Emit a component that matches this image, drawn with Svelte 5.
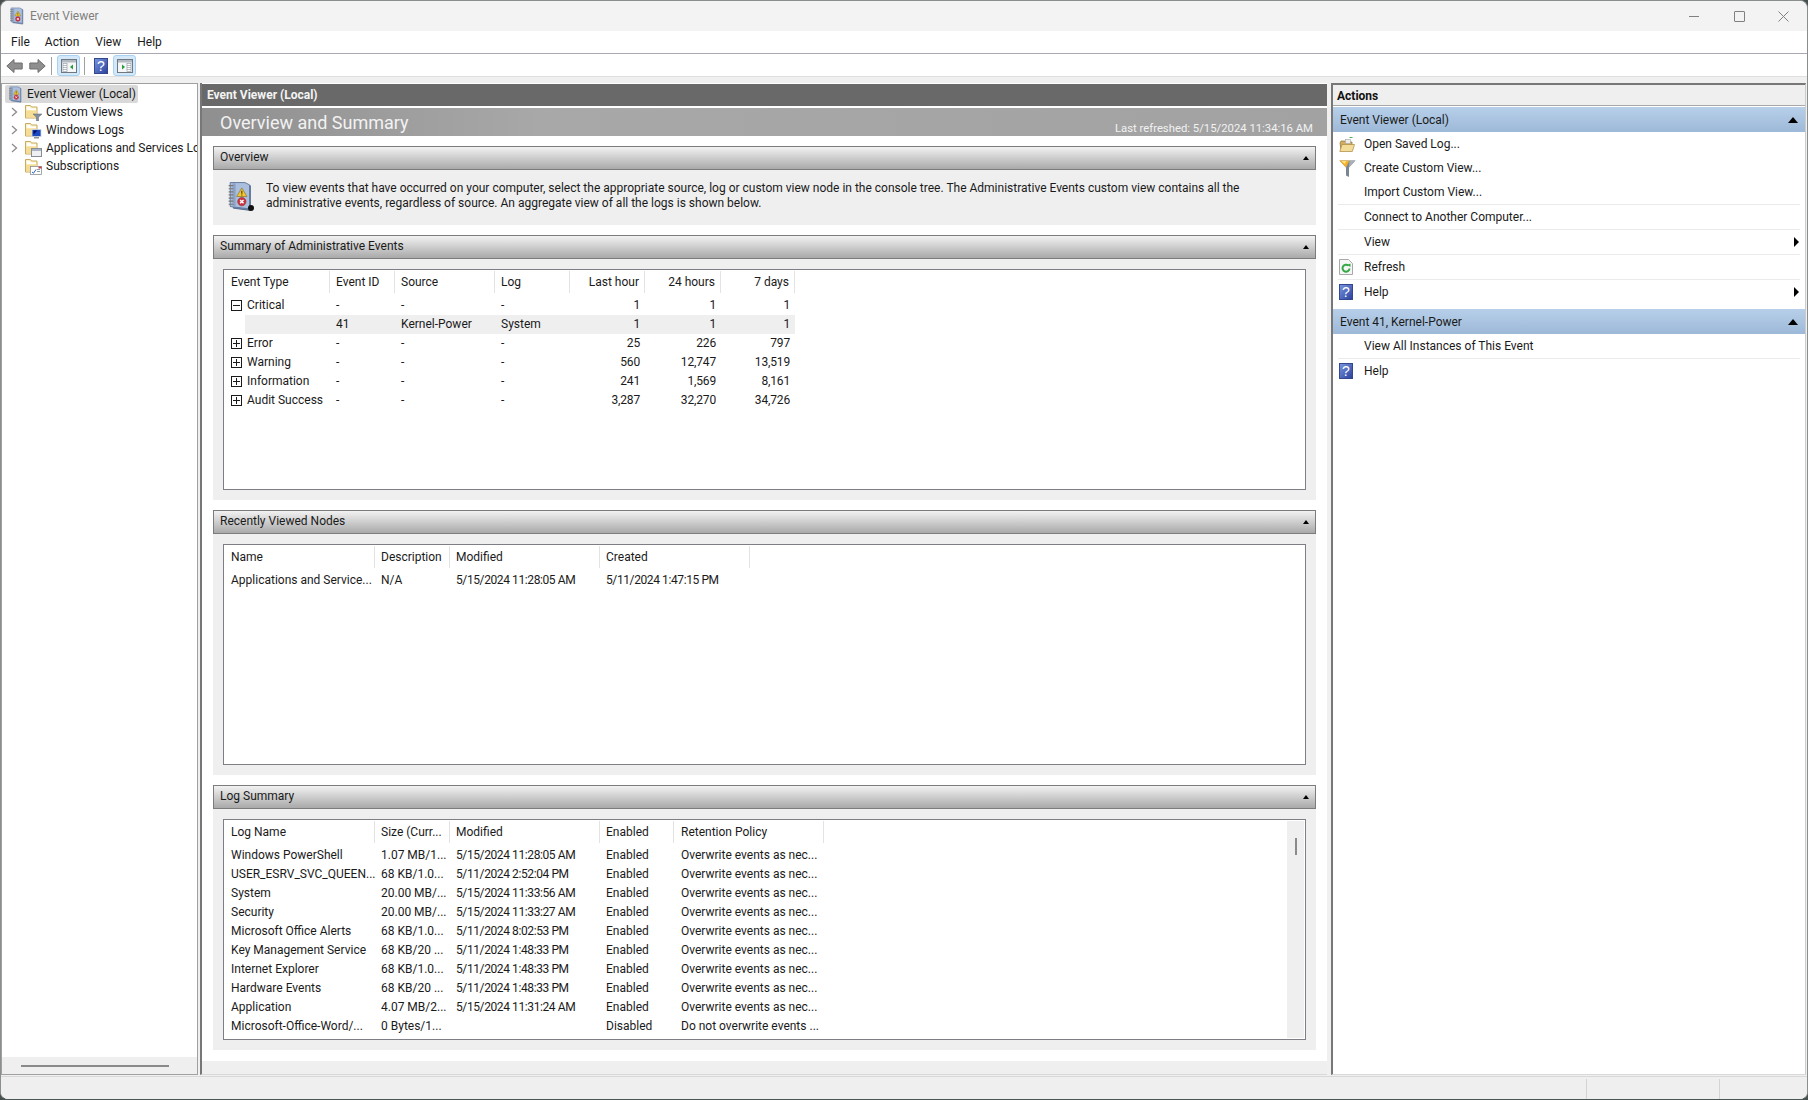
<script>
  const tree = [
    { label: 'Custom Views', kind: 'filter' },
    { label: 'Windows Logs', kind: 'logs' },
    { label: 'Applications and Services Logs', kind: 'apps' },
    { label: 'Subscriptions', kind: 'subs', leaf: true }
  ];
  const summaryRows = [
    { t: 'Critical', open: true, id: '-', src: '-', log: '-', a: '1', b: '1', c: '1' },
    { child: true, t: '', id: '41', src: 'Kernel-Power', log: 'System', a: '1', b: '1', c: '1' },
    { t: 'Error', id: '-', src: '-', log: '-', a: '25', b: '226', c: '797' },
    { t: 'Warning', id: '-', src: '-', log: '-', a: '560', b: '12,747', c: '13,519' },
    { t: 'Information', id: '-', src: '-', log: '-', a: '241', b: '1,569', c: '8,161' },
    { t: 'Audit Success', id: '-', src: '-', log: '-', a: '3,287', b: '32,270', c: '34,726' }
  ];
  const logs = [
    ['Windows PowerShell', '1.07 MB/1...', '5/15/2024 11:28:05 AM', 'Enabled', 'Overwrite events as nec...'],
    ['USER_ESRV_SVC_QUEEN...', '68 KB/1.0...', '5/11/2024 2:52:04 PM', 'Enabled', 'Overwrite events as nec...'],
    ['System', '20.00 MB/...', '5/15/2024 11:33:56 AM', 'Enabled', 'Overwrite events as nec...'],
    ['Security', '20.00 MB/...', '5/15/2024 11:33:27 AM', 'Enabled', 'Overwrite events as nec...'],
    ['Microsoft Office Alerts', '68 KB/1.0...', '5/11/2024 8:02:53 PM', 'Enabled', 'Overwrite events as nec...'],
    ['Key Management Service', '68 KB/20 ...', '5/11/2024 1:48:33 PM', 'Enabled', 'Overwrite events as nec...'],
    ['Internet Explorer', '68 KB/1.0...', '5/11/2024 1:48:33 PM', 'Enabled', 'Overwrite events as nec...'],
    ['Hardware Events', '68 KB/20 ...', '5/11/2024 1:48:33 PM', 'Enabled', 'Overwrite events as nec...'],
    ['Application', '4.07 MB/2...', '5/15/2024 11:31:24 AM', 'Enabled', 'Overwrite events as nec...'],
    ['Microsoft-Office-Word/...', '0 Bytes/1...', '', 'Disabled', 'Do not overwrite events ...']
  ];
  const actionsA = [
    { label: 'Open Saved Log...', icon: 'open' },
    { label: 'Create Custom View...', icon: 'funnel' },
    { label: 'Import Custom View...', sep: true },
    { label: 'Connect to Another Computer...', sep: true },
    { label: 'View', sep: true, more: true },
    { label: 'Refresh', sep: true, icon: 'refresh' },
    { label: 'Help', icon: 'help', more: true }
  ];
  const actionsB = [
    { label: 'View All Instances of This Event', sep: true },
    { label: 'Help', icon: 'help' }
  ];
</script>

{#snippet book(w, h)}
  <svg width={w} height={h} viewBox="0 0 16 20">
    <path d="M4 1.500 15 3v16L4 17.500z" fill="#6f8db8" stroke="#53688a" stroke-width=".6"/>
    <path d="M2 1h9.500l3 1.500v15.500L2 16.500z" fill="#a9bfdd" stroke="#60759a" stroke-width=".6"/>
    <path d="M3.500 1.500h2v15h-2z" fill="#8ea3c4"/>
    <path d="M1 3h3M1 5h3M1 7h3M1 9h3M1 11h3M1 13h3M1 15h3" stroke="#777" stroke-width=".8"/>
    <path d="M9.500 4.500 12.800 10H6.200z" fill="#f2c82e" stroke="#8a6a10" stroke-width=".4"/>
    <path d="M9.500 6.300v2M9.500 8.700v.6" stroke="#333" stroke-width=".7"/>
    <circle cx="9.500" cy="13.300" r="2.700" fill="#cc3340" stroke="#8a1c24" stroke-width=".3"/>
    <path d="M8.400 12.200l2.200 2.200M10.600 12.200l-2.200 2.200" stroke="#fff" stroke-width=".9"/>
  </svg>
{/snippet}

{#snippet folder(kind)}
  <svg width="17" height="17" viewBox="0 0 17 17">
    <path d="M.5 1.500h5l1 1.500h5.500v11H.5z" fill="#fdf0c4" stroke="#c8aa62"/>
    <path d="M2 3h3l1 1.500h5V6H2z" fill="#fff" />
    <path d="M1 6.500h10.500V13.500H1z" fill="#f6dd95"/>
    {#if kind === 'filter'}
      <path d="M8 10h9l-3.500 3.200V17h-2v-3.800z" fill="#87919c" stroke="#5d6670" stroke-width=".5"/>
    {:else if kind === 'logs'}
      <rect x="7" y="7.500" width="9" height="7" fill="#1c49bd" stroke="#d2d9e6" stroke-width=".8"/>
      <path d="M8.500 8.500l4 0-4 4z" fill="#000d60"/>
      <path d="M9 15h5v1.500H9z" fill="#8a8f98"/>
    {:else if kind === 'apps'}
      <rect x="6.500" y="8.500" width="10" height="8" fill="#eef0f4" stroke="#878c95"/>
      <rect x="7" y="9" width="9" height="2" fill="#a9b4c4"/>
    {:else}
      <rect x="5.500" y="8.500" width="11" height="8" fill="#fff" stroke="#8b8f98" stroke-width=".8"/>
      <path d="M7 14l1.500 1.200L11 11.500" stroke="#2a62c8" fill="none"/>
      <path d="M12 11.500h3M12 13.500h3" stroke="#8d98aa"/>
      <rect x="13.500" y="8.500" width="3" height="2" fill="#c84040"/>
    {/if}
  </svg>
{/snippet}

{#snippet helpIcon()}
  <svg width="14" height="16" viewBox="0 0 14 16">
    <defs><linearGradient id="hg" x1="0" y1="0" x2="1" y2="1"><stop offset="0" stop-color="#7a98e0"/><stop offset="1" stop-color="#2a3f9c"/></linearGradient></defs>
    <rect x=".5" y=".5" width="13" height="15" fill="url(#hg)" stroke="#33478f"/>
    <text x="7" y="13" text-anchor="middle" font-size="14" font-weight="400" fill="#fff" font-family="Liberation Sans, sans-serif">?</text>
  </svg>
{/snippet}

{#snippet paneBtn(dir)}
  <svg width="16" height="14" viewBox="0 0 16 14">
    <rect x=".5" y=".5" width="15" height="13" fill="#f4f6f8" stroke="#6f7780"/>
    <rect x="1" y="1" width="14" height="2.500" fill="#b4bac2"/>
    {#if dir === 'l'}
      <rect x="2" y="4.500" width="4" height="8" fill="#fff" stroke="#8a93a0" stroke-width=".6"/>
      <path d="M2 6.500h4M2 8.500h4M2 10.500h4" stroke="#8a93a0" stroke-width=".6"/>
      <path d="M12 5.500v5L9 8z" fill="#2a9a3a"/>
    {:else}
      <rect x="10" y="4.500" width="4" height="8" fill="#fff" stroke="#8a93a0" stroke-width=".6"/>
      <path d="M10 6.500h4M10 8.500h4M10 10.500h4" stroke="#8a93a0" stroke-width=".6"/>
      <path d="M5 5.500v5l3-2.500z" fill="#2a9a3a"/>
    {/if}
  </svg>
{/snippet}

{#snippet actionIcon(name)}
  {#if name === 'open'}
    <svg width="17" height="17" viewBox="0 0 17 17">
      <path d="M10.500 1.500h3" stroke="#4caf50"/>
      <path d="M1 7l1-2h4l1 1h6v8H2z" fill="#d2ae62" stroke="#8d7130" stroke-width=".7"/>
      <rect x="6.500" y="3.500" width="5" height="4" fill="#eee" stroke="#999" stroke-width=".5"/>
      <path d="M.8 15.500l2.200-7h12.500l-2.200 7z" fill="#f3dc98" stroke="#a98a40" stroke-width=".7"/>
    </svg>
  {:else if name === 'funnel'}
    <svg width="17" height="19" viewBox="0 0 17 19">
      <path d="M.5 1.500h16l-6.500 7V18l-3-1.500v-8z" fill="#7a8792"/>
      <path d="M.5 1.500h10L7 8.500z" fill="#f5ae28"/>
      <path d="M2.500 2h5L5.500 5z" fill="#ffe27a"/>
      <path d="M10.500 1.500h6l-6.500 7z" fill="#a7afb8"/>
    </svg>
  {:else if name === 'refresh'}
    <svg width="14" height="16" viewBox="0 0 14 16">
      <path d="M.5.500h9l4 4v11H.5z" fill="#f6f6f6" stroke="#a8a8a8"/>
      <path d="M10.500 9.500a3.500 3.500 0 1 1-1.200-3" fill="none" stroke="#35a845" stroke-width="2"/>
      <path d="M8 6l3.500-1.500V8z" fill="#35a845"/>
    </svg>
  {:else if name === 'help'}
    {@render helpIcon()}
  {/if}
{/snippet}

{#snippet action(it)}
  <div class="act" class:sep={it.sep}>
    <span class="act-ic">{#if it.icon}{@render actionIcon(it.icon)}{/if}</span>
    <span class="act-lbl">{it.label}</span>
    {#if it.more}<span class="more"></span>{/if}
  </div>
{/snippet}

{#snippet secHead(title)}
  <div class="sec-head"><span>{title}</span><i class="tri-small"></i></div>
{/snippet}

<div class="win">
  <header class="title">
    <span class="title-ic">{@render book(15, 18)}</span>
    <span class="title-txt">Event Viewer</span>
    <div class="controls">
      <i class="c-min"></i><i class="c-max"></i>
      <svg class="c-close" width="11" height="11" viewBox="0 0 11 11"><path d="M.5.500l10 10M10.500.500l-10 10" stroke="#808080"/></svg>
    </div>
  </header>
  <nav class="menu">
    <span class="m1">File</span><span class="m2">Action</span><span class="m3">View</span><span class="m4">Help</span>
  </nav>
  <div class="toolbar">
    <svg class="tb-arrow" width="17" height="16" viewBox="0 0 17 16"><path d="M.8 8 8 1.500V5h8.200v6H8v3.500z" fill="#8f8f8f" stroke="#6f6f6f"/></svg>
    <svg class="tb-arrow second" width="17" height="16" viewBox="0 0 17 16"><path d="M16.200 8 9 1.500V5H.8v6H9v3.500z" fill="#8f8f8f" stroke="#6f6f6f"/></svg>
    <i class="tb-sep s1"></i>
    <span class="tb-btn b1">{@render paneBtn('l')}</span>
    <i class="tb-sep s2"></i>
    <span class="tb-help">{@render helpIcon()}</span>
    <span class="tb-btn b2">{@render paneBtn('r')}</span>
  </div>

  <div class="main">
    <aside class="left">
      <div class="tree">
        <div class="root"><span class="root-ic">{@render book(14, 17)}</span><span>Event Viewer (Local)</span></div>
        {#each tree as n}
          <div class="node">
            <span class="chev">
              {#if !n.leaf}<svg width="7" height="10" viewBox="0 0 7 10"><path d="M1 1l4.500 4L1 9" fill="none" stroke="#8c8c8c" stroke-width="1.300"/></svg>{/if}
            </span>
            <span class="node-ic">{@render folder(n.kind)}</span>
            <span class="node-lbl">{n.label}</span>
          </div>
        {/each}
      </div>
      <div class="hscroll"><i></i></div>
    </aside>

    <section class="center">
      <div class="c-head">Event Viewer (Local)</div>
      <div class="c-body">
        <div class="banner"><span class="b-title">Overview and Summary</span><span class="b-time">Last refreshed: 5/15/2024 11:34:16 AM</span></div>
        <div class="scroller">
          <div class="sections">
            {@render secHead('Overview')}
            <div class="ov-body">
              <span class="ov-ic">
                {@render book(25, 31)}
                <i class="ov-dot"></i>
              </span>
              <p>To view events that have occurred on your computer, select the appropriate source, log or custom view node in the console tree. The Administrative Events custom view contains all the administrative events, regardless of source. An aggregate view of all the logs is shown below.</p>
            </div>

            {@render secHead('Summary of Administrative Events')}
            <div class="sec-body">
              <div class="box">
                <div class="grid-sum ghead">
                  <span>Event Type</span><span>Event ID</span><span>Source</span><span>Log</span>
                  <span class="r">Last hour</span><span class="r">24 hours</span><span class="r">7 days</span>
                </div>
                {#each summaryRows as r}
                  <div class="grid-sum grow" class:child={r.child}>
                    <span class="typ">
                      {#if !r.child}<i class="exp" class:open={r.open}></i>{/if}{r.t}
                    </span>
                    <span>{r.id}</span><span>{r.src}</span><span>{r.log}</span>
                    <span class="r">{r.a}</span><span class="r">{r.b}</span><span class="r">{r.c}</span>
                  </div>
                {/each}
              </div>
            </div>

            {@render secHead('Recently Viewed Nodes')}
            <div class="sec-body">
              <div class="box">
                <div class="grid-rec ghead">
                  <span>Name</span><span>Description</span><span>Modified</span><span>Created</span>
                </div>
                <div class="grid-rec grow">
                  <span>Applications and Service...</span><span>N/A</span><span>5/15/2024 11:28:05 AM</span><span>5/11/2024 1:47:15 PM</span>
                </div>
              </div>
            </div>

            {@render secHead('Log Summary')}
            <div class="sec-body last">
              <div class="box">
                <div class="vscroll"><i></i></div>
                <div class="grid-log ghead">
                  <span>Log Name</span><span>Size (Curr...</span><span>Modified</span><span>Enabled</span><span>Retention Policy</span>
                </div>
                {#each logs as l}
                  <div class="grid-log grow">
                    {#each l as c}<span>{c}</span>{/each}
                  </div>
                {/each}
              </div>
            </div>
          </div>
          <div class="c-strip"></div>
        </div>
      </div>
    </section>

    <aside class="right">
      <div class="a-head">Actions</div>
      <div class="a-group"><span>Event Viewer (Local)</span><i class="tri"></i></div>
      <div class="a-list">
        {#each actionsA as it}{@render action(it)}{/each}
      </div>
      <div class="a-group"><span>Event 41, Kernel-Power</span><i class="tri"></i></div>
      <div class="a-list">
        {#each actionsB as it}{@render action(it)}{/each}
      </div>
    </aside>
  </div>

  <footer class="status"><i></i><i></i></footer>
</div>

<style>
  :global(body) { margin: 0; background: #48504f; }
  .win {
    width: 1808px; height: 1100px; box-sizing: border-box; overflow: hidden;
    display: flex; flex-direction: column; background: #f0f0f0;
    border-radius: 8px; border: 1px solid #8a8f8e; border-bottom-color: #4a5654;
    font: 12px/16px Roboto, sans-serif; color: #1a1a1a;
  }
  i { display: block; font-style: normal; }
  .title { height: 30px; flex: none; display: flex; align-items: center; background: #f3f3f3; }
  .title-ic { display: flex; margin-left: 8px; }
  .title-txt { margin-left: 6px; color: #7f7f7f; }
  .controls { margin-left: auto; display: flex; align-items: center; }
  .c-min { width: 10px; height: 1px; background: #808080; margin-right: 35px; }
  .c-max { width: 9px; height: 9px; border: 1px solid #808080; border-radius: 1px; margin-right: 33px; }
  .c-close { margin-right: 18px; }

  .menu { height: 23px; box-sizing: border-box; flex: none; background: #fff; border-bottom: 1px solid #a9a9b4; display: flex; align-items: center; }
  .m1 { margin-left: 10px; } .m2 { margin-left: 15px; } .m3 { margin-left: 16px; } .m4 { margin-left: 16px; }

  .toolbar { height: 23px; box-sizing: border-box; padding-top: 1px; flex: none; background: #fff; border-bottom: 1px solid #dfdfdf; display: flex; align-items: center; }
  .tb-arrow { margin-left: 5px; }
  .tb-arrow.second { margin-left: 6px; }
  .tb-sep { width: 1px; height: 18px; background: #a0a0a0; }
  .s1 { margin-left: 5px; } .s2 { margin-left: 2px; }
  .tb-btn { width: 23px; height: 21px; box-sizing: border-box; display: flex; align-items: center; justify-content: center; background: #d3e8f9; border: 1px solid #a8d2f2; border-radius: 3px; }
  .b1 { margin-left: 5px; margin-right: 2px; }
  .b2 { margin-left: 5px; }
  .tb-help { display: flex; margin-left: 9px; }

  .main { height: 992px; flex: none; margin-top: 6px; display: flex; background: #f0f0f0; }
  .left { width: 197px; flex: none; box-sizing: border-box; border: 1px solid #a0a0a0; background: #fff; display: flex; flex-direction: column; }
  .tree { flex: 1; padding-top: 1px; overflow: hidden; }
  .root { height: 18px; width: 133px; margin-left: 3px; background: #d9d9d9; border-radius: 2px; display: flex; align-items: center; white-space: nowrap; }
  .root-ic { display: flex; margin: 0 5px 0 3px; }
  .node { height: 18px; display: flex; align-items: center; white-space: nowrap; }
  .chev { width: 23px; flex: none; display: flex; padding-left: 9px; box-sizing: border-box; }
  .node-ic { display: flex; width: 21px; flex: none; }
  .node-lbl { overflow: hidden; color: #1a1a1a; }
  .hscroll { height: 17px; flex: none; background: #efefef; display: flex; align-items: center; padding-left: 19px; }
  .hscroll i { width: 148px; height: 2px; background: #8a8a8a; }

  .center { width: 1127px; flex: none; margin-left: 2px; border-left: 2px solid #777; border-bottom: 1px solid #d8d8d8; background: #fff; display: flex; flex-direction: column; box-sizing: border-box; }
  .c-head { height: 22px; flex: none; margin-top: 1px; background: #696969; color: #f4f4f4; font-weight: 700; line-height: 22px; padding-left: 5px; }
  .c-body { flex: 1; margin-top: 2px; display: flex; flex-direction: column; min-height: 0; }
  .banner { height: 28px; box-sizing: border-box; flex: none; background: linear-gradient(to right, #8f8f8f, #a8a8a8 30%, #a2a2a2); display: flex; align-items: flex-end; justify-content: space-between; padding: 0 14px 0 18px; color: #f2f2f2; }
  .b-title { font-size: 18px; line-height: 30px; height: 28px; }
  .b-time { line-height: 14px; font-size: 11.3px; }
  .scroller { flex: 1; min-height: 0; display: flex; flex-direction: column; }
  .sections { flex: 1; padding: 10px 11px 0 11px; }
  .c-strip { height: 13px; flex: none; background: #efefef; }

  .sec-head { height: 24px; box-sizing: border-box; border: 1px solid #7c7c7c; display: flex; align-items: center; justify-content: space-between; padding: 0 6px 2px; background: linear-gradient(#f2f2f2, #a9a9a9); }
  .tri-small { width: 0; height: 0; border: 3px solid transparent; border-top: 0; border-bottom: 4px solid #000; margin-top: 2px; }
  .ov-body { height: 55px; background: #efefef; margin-bottom: 10px; display: flex; box-sizing: border-box; padding: 11px 0 0 14px; }
  .ov-ic { width: 39px; flex: none; display: block; position: relative; }
  .ov-dot { position: absolute; left: 21px; top: 24px; width: 6px; height: 6px; border-radius: 50%; background: #111; }
  .ov-body p { margin: 0; line-height: 15px; width: 1000px; }
  .sec-body { height: 241px; margin-bottom: 10px; background: #efefef; box-sizing: border-box; padding: 10px; }
  .sec-body.last { margin-bottom: 0; }
  .box { height: 221px; box-sizing: border-box; border: 1px solid #7e7e86; background: #fff; padding-top: 1px; position: relative; overflow: hidden; }

  .ghead { height: 25px; align-items: start; }
  .ghead span { border-right: 1px solid #e3e3e3; line-height: 22px; padding-left: 7px; height: 22px; white-space: nowrap; overflow: hidden; box-sizing: border-box; }
  .grow { height: 19px; align-items: center; line-height: 19px; white-space: nowrap; }
  .grow span { padding-left: 7px; overflow: hidden; }
  .grid-sum { display: grid; grid-template-columns: 106px 65px 100px 75px 75px 76px 74px; width: 571px; }
  .grid-rec { display: grid; grid-template-columns: 151px 75px 150px 150px; width: 526px; }
  .grid-log { display: grid; grid-template-columns: 151px 75px 150px 74px 150px; width: 600px; }
  .ghead span:nth-child(n+2):nth-child(-n+4), .grow span:nth-child(n+2):nth-child(-n+4) { padding-left: 6px; }
  .grid-rec.grow span:nth-child(n+3), .grid-log.grow span:nth-child(3) { letter-spacing: -0.4px; }
  .grid-sum.grow .r { letter-spacing: -0.15px; }
  .r { text-align: right; padding-right: 5px; box-sizing: border-box; }
  .grow .r { padding-right: 5px; }
  .typ { display: flex; align-items: center; gap: 5px; }
  .child { background: linear-gradient(to right, transparent 21px, #efefef 21px); }
  .exp { width: 11px; height: 11px; border: 1px solid #1a1a1a; box-sizing: border-box; position: relative; flex: none; }
  .exp::before { content: ""; position: absolute; left: 1px; right: 1px; top: 4px; height: 1px; background: #1a1a1a; }
  .exp:not(.open)::after { content: ""; position: absolute; top: 1px; bottom: 1px; left: 4px; width: 1px; background: #1a1a1a; }
  .vscroll { position: absolute; right: 1px; top: 1px; bottom: 1px; width: 17px; background: #efefef; }
  .vscroll i { position: absolute; left: 8px; top: 17px; width: 2px; height: 17px; background: #8a8a8a; }

  .right { width: 475px; flex: none; margin-left: 4px; box-sizing: border-box; border-left: 2px solid #777; border-top: 2px solid #777; border-right: 1px solid #ccc; border-bottom: 1px solid #d8d8d8; background: #fff; }
  .a-head { height: 21px; box-sizing: border-box; padding: 1px 0 0 4px; background: #efefef; border-bottom: 1px solid #a8a8a8; font-weight: 700; line-height: 20px; color: #111; }
  .a-group { height: 25px; margin-top: 1px; display: flex; align-items: center; justify-content: space-between; padding: 0 7px; background: linear-gradient(#b7cfe9, #9db9d8); }
  .tri { width: 0; height: 0; border: 5px solid transparent; border-top: 0; border-bottom: 6px solid #000; }
  .a-list { padding: 0 5px; margin-bottom: 5px; }
  .act { height: 24px; display: flex; align-items: center; box-sizing: border-box; }
  .act.sep { height: 25px; border-bottom: 1px solid #eaeaea; }
  .act-ic { width: 26px; flex: none; display: flex; align-items: center; padding-left: 1px; box-sizing: border-box; }
  .more { margin-left: auto; margin-right: 1px; width: 0; height: 0; border: 5px solid transparent; border-right: 0; border-left: 5px solid #000; }

  .status { flex: 1; background: #efefef; border-top: 1px solid #d8d8d8; display: flex; justify-content: flex-end; margin-top: 1px; }
  .status i { width: 1px; height: 20px; margin-top: 2px; background: #d4d4d4; }
  .status i:first-child { margin-right: 132px; }
  .status i:last-child { margin-right: 87px; }
</style>
